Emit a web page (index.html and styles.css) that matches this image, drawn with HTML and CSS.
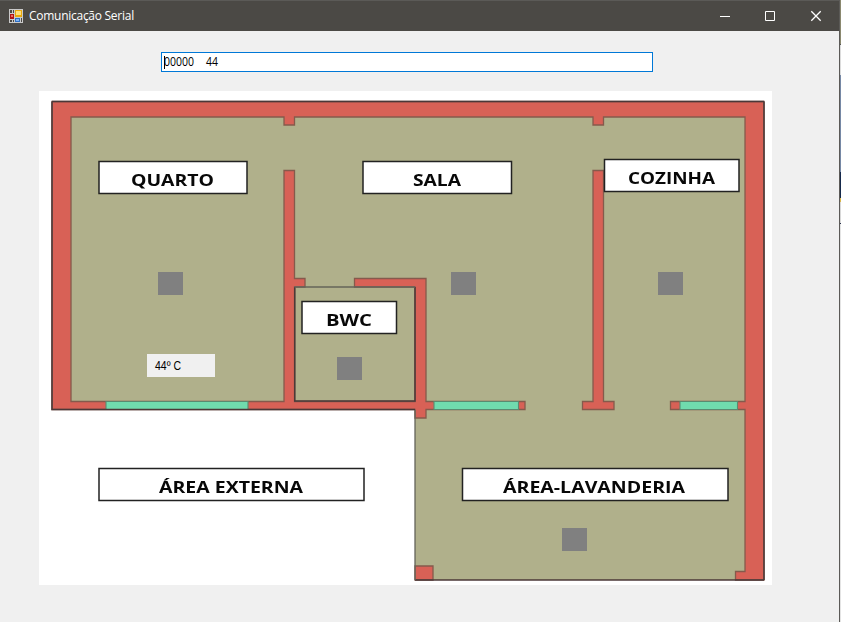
FILE: index.html
```html
<!DOCTYPE html>
<html lang="pt-BR">
<head>
<meta charset="utf-8">
<title>Comunicação Serial</title>
<link rel="stylesheet" href="styles.css">
</head>
<body>
<div class="desktop">
<main class="window">
  <header class="titlebar">
    <svg class="app-icon" width="14" height="14" viewBox="0 0 14 14" shape-rendering="crispEdges">
      <path fill="#c9c9c9" d="M0 0h14v14H0z"/>
      <path fill="#4b4945" d="M1 1h2v3H1zM4 1h1v3H4zM1 11h2v2H1zM4 11h1v2H4z"/>
      <path fill="#b01515" d="M1 5h4v5H1z"/><path fill="#ef6a5e" d="M2 6h2v2H2z"/>
      <path fill="#e8a80c" d="M6 1h7v7H6z"/><path fill="#ffe07a" d="M7 2h5v4H7z"/>
      <path fill="#2e6fc4" d="M6 9h5v4H6z"/><path fill="#82b4f2" d="M7 10h3v2H7z"/>
      <path fill="#4b4945" d="M12 9h1v4h-1z"/>
    </svg>
    <h1 class="title">Comunicação Serial</h1>
    <div class="controls">
      <svg width="46" height="30" viewBox="0 0 46 30"><path d="M19 15.500h10"/></svg>
      <svg width="46" height="30" viewBox="0 0 46 30"><path d="M18.500 10.500h9v9h-9z"/></svg>
      <svg class="close" width="46" height="30" viewBox="0 0 46 30"><path d="M18.300 10.300l9.400 9.400M27.700 10.300l-9.400 9.400"/></svg>
    </div>
  </header>
  <div class="serial"><span class="caret"></span><svg class="serial-text" width="480" height="18"><text x="-1" y="13" textLength="30" lengthAdjust="spacingAndGlyphs">00000</text><text x="41" y="13" textLength="12" lengthAdjust="spacingAndGlyphs">44</text></svg></div>
  <svg class="plan" width="733" height="494" viewBox="39 91 733 494">
    <path fill="#fff" d="M39 91h733v494H39z"/>
    <g class="drawing">
      <path class="floor" d="M52 102H764V580H415V409H52z"/>
      <path class="wall" fill-rule="evenodd" d="M52 101.500H764V580H735.500V571.500H745V409.500H670.500V401.500H745V117H603.500V125H593V117H294.500V125H284V117H71V401.500H284V170.500H294.500V278.500H305V287H294.500V401.500H415V287H354.500V278.500H426V401.500H525V409.500H426V418H415V409.500H52z"/>
      <path class="wall" d="M593 170.500h10.500v231h10.500v8h-31.500v-8H593zM415 566h18v14h-18z"/>
      <path class="glass" d="M106 401.500h142v8H106zM434 401.500h84.500v8H434zM680 401.500h57.500v8H680z"/>
      <path class="edge" d="M52 101.500H764M52 101.500V409.500H415M764 101.500V580M415 580H764M294.800 287V401H415V287"/>
      <path class="thin" d="M415 410V580M294.500 287H415"/>
      <g class="plates">
        <path d="M99 161.500h148v32H99zM363 161.500h148.500v32H363zM604.500 159.500H739v32H604.500zM302 301.500h94.500v32H302zM99 468.500h265v32H99zM462.500 468.500H728v32H462.500z"/>
      </g>
      <g class="names">
        <text x="131" y="186" textLength="83" lengthAdjust="spacingAndGlyphs">QUARTO</text>
        <text x="413" y="186" textLength="48" lengthAdjust="spacingAndGlyphs">SALA</text>
        <text x="628" y="183.500" textLength="87" lengthAdjust="spacingAndGlyphs">COZINHA</text>
        <text x="326" y="326" textLength="46" lengthAdjust="spacingAndGlyphs">BWC</text>
        <text x="159" y="493" textLength="144" lengthAdjust="spacingAndGlyphs">ÁREA EXTERNA</text>
        <text x="503" y="493" textLength="182" lengthAdjust="spacingAndGlyphs">ÁREA-LAVANDERIA</text>
      </g>
    </g>
    <path class="lamps" d="M158 272h25v23h-25zM451 272h25v23h-25zM658 272h25v23h-25zM337 357h25v23h-25zM562 528h25v23h-25z"/>
    <path fill="#f0f0f0" d="M147 354h68v23h-68z"/>
    <text class="temp" x="155" y="370" textLength="26" lengthAdjust="spacingAndGlyphs">44º C</text>
  </svg>
</main>
<aside class="behind"></aside>
</div>
</body>
</html>
```
FILE: styles.css
```css
* { box-sizing: border-box; }
body { margin: 0; overflow: hidden; font-family: "Open Sans", "Noto Sans", sans-serif; }
.desktop { display: flex; width: 841px; height: 622px; }
.window { width: 840px; height: 622px; background: #f0f0f0; border-right: 1px solid #5b5a57; }
.titlebar { display: flex; align-items: center; height: 31px; padding-left: 9px; background: #4b4945; border-top: 1px solid #5b5a57; }
.app-icon { flex: none; }
.title { margin: 0 0 0 6px; color: #fff; font-size: 12px; font-weight: 400; line-height: 30px; letter-spacing: -0.27px; }
.controls { display: flex; margin-left: auto; }
.controls svg { fill: none; stroke: #fff; stroke-width: 1; margin-top: -1px; }
.controls .close { stroke-width: 1.3; }
.serial { display: flex; align-items: center; width: 492px; height: 20px; margin: 21px 0 0 161px; background: #fff; border: 1px solid #0078d7; padding-left: 2px; }
.caret { width: 1px; height: 13px; background: #000; }
.serial-text { overflow: visible; }
.serial-text { font-size: 12.5px; fill: #000; }
.temp { font: 12.5px "Liberation Sans", sans-serif; fill: #000; }
.plan { display: block; margin: 19px 0 0 39px; }
.drawing { filter: blur(0.5px); }
.floor { fill: #b0b08b; }
.wall { fill: #d86156; stroke: #855a4c; stroke-width: 1.3; }
.glass { fill: #70dbae; stroke: #5a8a70; stroke-width: 1.1; }
.edge { fill: none; stroke: #4b3838; stroke-width: 1.5; }
.thin { stroke: #64645a; stroke-width: 1.3; }
.plates { fill: #fff; stroke: #222; stroke-width: 1.5; }
.names { font: 700 16px "Open Sans", sans-serif; fill: #080808; }
.lamps { fill: #808080; }
.behind { width: 1px; height: 622px; background: linear-gradient(#8a886f 0 44px, #555 44px 45px, #dcdcdc 45px 75px, #7688a5 75px 172px, #15294b 172px 198px, #d9b64a 198px 202px, #d8d8d8 202px 223px, #27304a 223px 224px, #e4e4e4 224px); }
```
